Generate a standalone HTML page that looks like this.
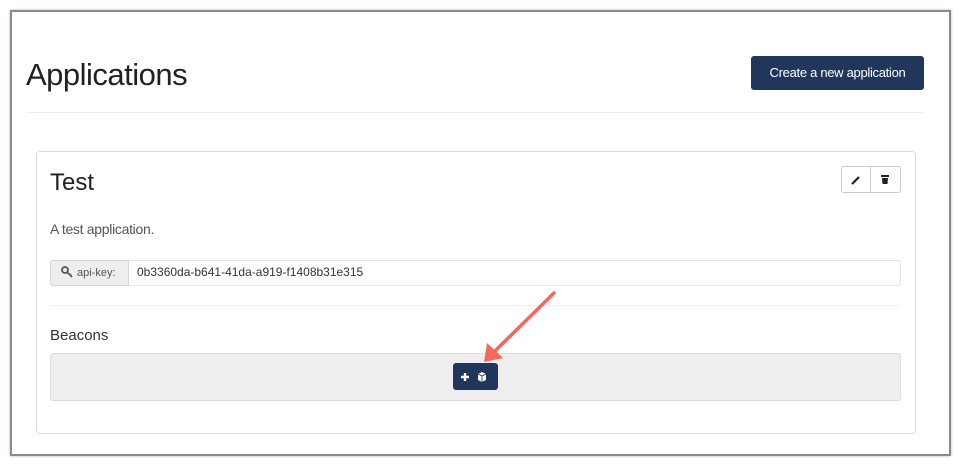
<!DOCTYPE html><html><head><style>
body{margin:0;width:960px;height:466px;background:#fff;font-family:"Liberation Sans",sans-serif;position:relative;overflow:hidden}
.frame{position:absolute;left:10px;top:10px;width:937px;height:442px;border:2px solid #8a8a8a;box-shadow:0 0 3px #bbb}
.abs{position:absolute}
</style></head><body>
<div class="frame"></div>
<div class="abs" style="left:26px;top:57px;font-size:31px;color:#222;letter-spacing:-0.5px">Applications</div>
<div class="abs" style="left:751px;top:56px;width:173px;height:34px;background:#20365a;border-radius:3px;color:#fff;font-size:13px;line-height:34px;text-align:center;letter-spacing:-0.3px">Create a new application</div>
<div class="abs" style="left:26px;top:112px;width:898px;height:1px;background:#eee"></div>
<div class="abs" style="left:36px;top:151px;width:878px;height:281px;border:1px solid #ddd;border-radius:4px"></div>
<div class="abs" style="left:50px;top:169px;font-size:24px;color:#222">Test</div>
<div class="abs" style="left:841px;top:166px;width:58px;height:25px;border:1px solid #ccc;border-radius:3px"></div>
<div class="abs" style="left:870px;top:166px;width:1px;height:27px;background:#ccc"></div>
<svg class="abs" style="left:849px;top:173px" width="14" height="14"><path d="M3 11 L10 4" stroke="#222" stroke-width="2.2"/></svg>
<svg class="abs" style="left:878px;top:172px" width="14" height="14"><rect x="3" y="3" width="8" height="2" fill="#222"/><path d="M4 6 H10 L9.5 12 H4.5Z" fill="#222"/></svg>
<div class="abs" style="left:50px;top:221px;font-size:14px;color:#555;letter-spacing:-0.3px">A test application.</div>
<div class="abs" style="left:50px;top:260px;width:849px;height:24px;border:1px solid #e4e4e4;border-radius:3px"></div>
<div class="abs" style="left:50px;top:260px;width:77px;height:24px;border:1px solid #d8d8d8;background:#eee;border-radius:3px 0 0 3px;font-size:11px;color:#555;line-height:24px;text-indent:26px">api-key:</div>
<svg class="abs" style="left:60px;top:265px" width="14" height="14"><circle cx="5" cy="5" r="3" fill="none" stroke="#555" stroke-width="1.8"/><path d="M7 7 L12 12 M10 10 L11 9" stroke="#555" stroke-width="1.6"/></svg>
<div class="abs" style="left:137px;top:265px;font-size:12px;color:#333">0b3360da-b641-41da-a919-f1408b31e315</div>
<div class="abs" style="left:50px;top:305px;width:850px;height:1px;background:#eee"></div>
<div class="abs" style="left:50px;top:327px;font-size:15px;color:#333">Beacons</div>
<div class="abs" style="left:50px;top:353px;width:849px;height:46px;background:#eee;border:1px solid #ddd;border-radius:3px"></div>
<div class="abs" style="left:453px;top:363px;width:45px;height:27px;background:#20365a;border-radius:3px"></div>
<svg class="abs" style="left:460px;top:370px" width="34" height="14"><path d="M5 3 V11 M1 7 H9" stroke="#fff" stroke-width="2.4"/><path d="M18 4 L22 2 L26 4 V10 L22 12 L18 10Z" fill="#fff"/><path d="M18 4 L22 6 L26 4 M22 6 V12" stroke="#20365a" stroke-width="0.8" fill="none"/></svg>
<svg class="abs" style="left:0;top:0" width="960" height="466"><path d="M554 293 L494 352" stroke="#f4695b" stroke-width="3.5" stroke-linecap="round"/><path d="M484 362 L487 343 L503 358Z" fill="#f4695b"/></svg>
</body></html>
